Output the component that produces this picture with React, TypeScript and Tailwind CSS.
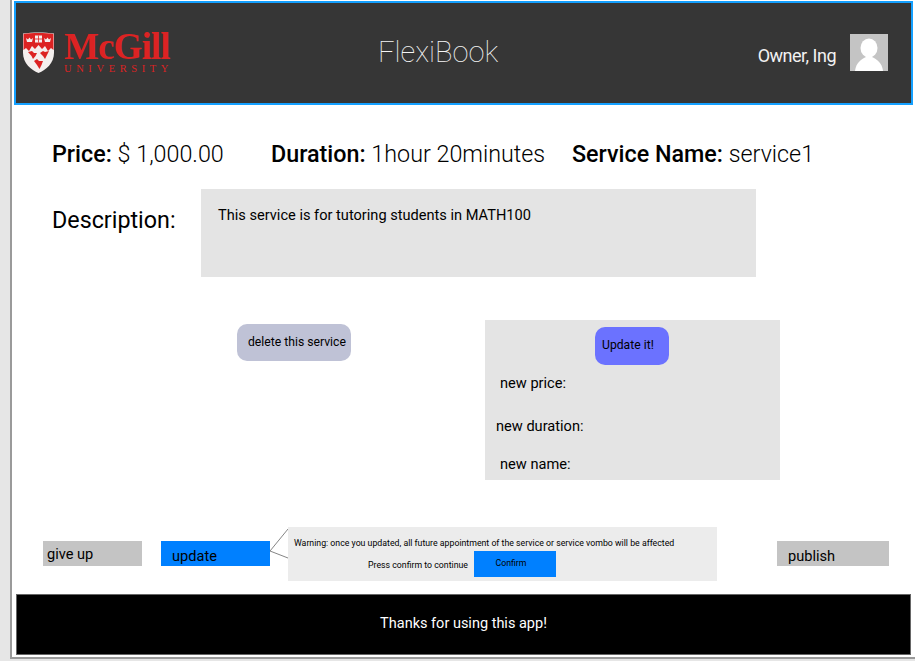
const roboto = "font-['Roboto','Liberation_Sans',sans-serif]";

function Shield() {
  return (
    <svg width="33" height="42" viewBox="0 0 33 42" className="shrink-0">
      <path d="M1 1.5 C10 0 23 0 32 1.5 L32 21 C32 31 24 38 16.5 41 C9 38 1 31 1 21 Z" fill="#f4efee" />
      <path d="M1.5 2 C10 .6 23 .6 31.5 2 L31.5 18 L29 16 L26 19 L23 14 L20 17 L16.5 13 L13 17 L10 14 L7 19 L4 16 L1.5 18 Z" fill="#dc2323" />
      <path d="M5 10 L4 6 L6 7.5 L7.5 5.5 L9 7.5 L11 6 L10 10 Z" fill="#f4efee" />
      <path d="M23 10 L22 6 L24 7.5 L25.5 5.5 L27 7.5 L29 6 L28 10 Z" fill="#f4efee" />
      <rect x="13" y="3.5" width="7" height="7" fill="#f4efee" />
      <path d="M16.5 3.5 V10.5 M13 7 H20" stroke="#dc2323" strokeWidth="0.8" />
      <path d="M6 20 L10 19 L12 21 L15 21 L13.5 24 L11 27 L9.5 24 Z" fill="#dc2323" />
      <path d="M18 21 L21 19 L23 20 L27 19 L25 23 L23 27 L21 24 Z" fill="#dc2323" />
      <path d="M12 29 L15 27 L17 29 L21 29 L19.5 33 L17.5 37 L15 33 Z" fill="#dc2323" />
    </svg>
  );
}

function Avatar() {
  return (
    <div className="h-[37px] w-[38px] shrink-0 overflow-hidden bg-[#c4c4c4]">
      <svg width="38" height="37" viewBox="0 0 38 37">
        <ellipse cx="19" cy="14" rx="8.5" ry="9.5" fill="#fff" />
        <path d="M5 37 C6 28 12 25 16 23 L22 23 C26 25 32 28 33 37 Z" fill="#fff" />
      </svg>
    </div>
  );
}

function Header() {
  return (
    <header className="ml-[2px] mt-px flex h-[104px] w-[899px] shrink-0 items-center border-2 border-[#14a0ff] bg-[#363636]">
      <div className="ml-[6px] flex w-[150px] items-center gap-[9px]">
        <Shield />
        <div className="flex flex-col whitespace-nowrap font-['Liberation_Serif',serif] text-[#dc2323]">
          <span className="text-[37px] leading-[28px] font-bold tracking-[-0.9px]">McGill</span>
          <span className="mt-[2px] text-[10.5px] leading-[11px] tracking-[4.6px]">UNIVERSITY</span>
        </div>
      </div>
      <div className={`ml-[206px] text-[29px] font-thin text-[#f5f5f5] ${roboto}`}>FlexiBook</div>
      <div className={`ml-auto mt-[5px] text-[18px] tracking-[-0.5px] text-[#f2f2f2] ${roboto}`}>Owner, Ing</div>
      <div className="mr-[23px] ml-[14px] mb-[2px]">
        <Avatar />
      </div>
    </header>
  );
}

function Info() {
  return (
    <div className="mt-[34px] ml-[40px] flex h-[30px] items-center text-[23.3px] leading-[30px] text-black">
      <div className="w-[219px] whitespace-nowrap"><span className="font-medium">Price:</span> <span className="font-light">$ 1,000.00</span></div>
      <div className="w-[301px] whitespace-nowrap"><span className="font-medium">Duration:</span> <span className="font-light">1hour 20minutes</span></div>
      <div className="whitespace-nowrap"><span className="font-medium">Service Name:</span> <span className="font-light">service1</span></div>
    </div>
  );
}

function Description() {
  return (
    <div className="mt-[20px] ml-[40px] flex items-start">
      <div className="mt-[16px] w-[149px] text-[23.3px] leading-[30px]">Description:</div>
      <div className="h-[88px] w-[555px] bg-[#e4e4e4] pt-[17px] pl-[17px] text-[14.6px] leading-[18px]">
        This service is for tutoring students in MATH100
      </div>
    </div>
  );
}

function Middle() {
  return (
    <div className="mt-[43px] ml-[225px] flex items-start">
      <button className="mt-[4px] h-[37px] w-[114px] rounded-[10px] bg-[#bfc2d6] pr-[1px] pl-[11px] text-left text-[12.2px]">
        delete this service
      </button>
      <div className="ml-[134px] flex h-[160px] w-[295px] flex-col bg-[#e4e4e4] text-[14.6px] leading-[18px]">
        <button className="mt-[7px] ml-[110px] h-[38px] w-[74px] rounded-[10px] bg-[#6b72ff] pb-[2px] pl-[7px] text-left text-[12.2px]">Update it!</button>
        <div className="mt-[9px] ml-[15px]">new price:</div>
        <div className="mt-[25px] ml-[11px]">new duration:</div>
        <div className="mt-[20px] ml-[15px]">new name:</div>
      </div>
    </div>
  );
}

function Actions() {
  return (
    <div className="mt-[47px] ml-[31px] flex items-start">
      <div className="mt-[14px] h-[25px] w-[99px] bg-[#c4c4c4] pl-[4px] text-[14.6px] leading-[26px]">give up</div>
      <div className="mt-[14px] ml-[19px] h-[25px] w-[109px] bg-[#0080ff] pl-[11px] text-[14.6px] leading-[30px]">update</div>
      <svg width="18" height="54" viewBox="0 0 18 54" className="shrink-0">
        <path d="M0 24 L18 2 M0 24 L18 31" stroke="#666" strokeWidth="0.8" fill="none" />
      </svg>
      <div className="h-[54px] w-[429px] bg-[#ececec] pt-[11px] text-[8.75px]">
        <div className="ml-[6px] leading-[11px]">Warning: once you updated, all future appointment of the service or service vombo will be affected</div>
        <div className="flex items-start">
          <div className="mt-[11px] ml-[80px] w-[106px] leading-[11px]">Press confirm to continue</div>
          <button className="mt-[2px] h-[26px] w-[82px] bg-[#0080ff] pr-[8px] text-[8.75px]">Confirm</button>
        </div>
      </div>
      <div className="mt-[14px] ml-[60px] h-[25px] w-[112px] bg-[#c4c4c4] pl-[11px] text-[14.6px] leading-[30px]">publish</div>
    </div>
  );
}

export default function App() {
  return (
    <div className={`flex h-[661px] w-[915px] overflow-hidden bg-[#e6e6e6] ${roboto}`}>
      <main className="ml-[10px] flex h-[659px] w-[905px] flex-col border-b-2 border-l-2 border-[#9a9a9a] bg-white">
        <Header />
        <Info />
        <Description />
        <Middle />
        <Actions />
        <footer className="mt-[13px] ml-[4px] flex h-[61px] w-[895px] items-center justify-center border border-[#666] bg-black pb-[2px] text-[14.5px] text-white">
          Thanks for using this app!
        </footer>
      </main>
    </div>
  );
}
